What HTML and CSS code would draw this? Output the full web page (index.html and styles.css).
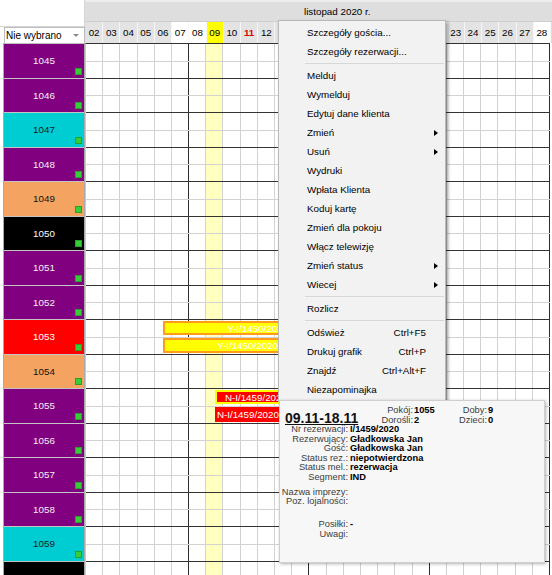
FILE: index.html
```html
<!DOCTYPE html>
<html lang="pl">
<head>
<meta charset="utf-8">
<title>Grafik rezerwacji</title>
<link rel="stylesheet" href="styles.css">
</head>
<body>
<div class="app">
  <div class="head">
    <div class="corner">
      <div class="corner-blank"></div>
      <div class="combo"><span>Nie wybrano</span><span class="combo-arrow"></span></div>
    </div>
    <div class="tl-head">
      <div class="month">listopad 2020 r.</div>
      <div class="days">
        <div class="day">02</div><div class="day">03</div><div class="day">04</div><div class="day">05</div><div class="day">06</div>
        <div class="day we">07</div><div class="day we">08</div><div class="day today">09</div><div class="day">10</div><div class="day hol">11</div>
        <div class="day">12</div><div class="day">13</div><div class="day we">14</div><div class="day we">15</div><div class="day">16</div>
        <div class="day">17</div><div class="day">18</div><div class="day">19</div><div class="day">20</div><div class="day we">21</div>
        <div class="day we">22</div><div class="day">23</div><div class="day">24</div><div class="day">25</div><div class="day">26</div>
        <div class="day">27</div><div class="day we">28</div>
      </div>
    </div>
  </div>

  <div class="body">
    <div class="rooms">
      <div class="room purple">1045<i class="flag"></i></div>
      <div class="room purple">1046<i class="flag"></i></div>
      <div class="room cyan">1047<i class="flag"></i></div>
      <div class="room purple">1048<i class="flag"></i></div>
      <div class="room sand">1049<i class="flag"></i></div>
      <div class="room black">1050<i class="flag"></i></div>
      <div class="room purple">1051<i class="flag"></i></div>
      <div class="room purple">1052<i class="flag"></i></div>
      <div class="room red">1053<i class="flag"></i></div>
      <div class="room sand">1054<i class="flag"></i></div>
      <div class="room purple">1055<i class="flag"></i></div>
      <div class="room purple">1056<i class="flag"></i></div>
      <div class="room purple">1057<i class="flag"></i></div>
      <div class="room purple">1058<i class="flag"></i></div>
      <div class="room cyan">1059<i class="flag"></i></div>
      <div class="room black">1060<i class="flag"></i></div>
    </div>

    <div class="grid">
      <div class="cols">
        <div class="col"></div><div class="col"></div><div class="col"></div><div class="col"></div><div class="col"></div>
        <div class="col wk"></div><div class="col"></div><div class="col today"></div><div class="col"></div><div class="col"></div>
        <div class="col"></div><div class="col"></div><div class="col wk"></div><div class="col"></div><div class="col"></div>
        <div class="col"></div><div class="col"></div><div class="col"></div><div class="col"></div><div class="col wk"></div>
        <div class="col"></div><div class="col"></div><div class="col"></div><div class="col"></div><div class="col"></div>
        <div class="col"></div><div class="col wk"></div>
      </div>
      <div class="rows">
        <div class="row"></div><div class="row"></div><div class="row"></div><div class="row"></div>
        <div class="row"></div><div class="row"></div><div class="row"></div><div class="row"></div>
        <div class="row"></div><div class="row"></div><div class="row"></div><div class="row"></div>
        <div class="row"></div><div class="row"></div><div class="row"></div><div class="row"></div>
      </div>
      <div class="bars">
        <div class="bar yellow b1">Y-I/1450/2020</div>
        <div class="bar yellow b2">Y-I/1450/2020</div>
        <div class="bar red sel b3">N-I/1459/2020</div>
        <div class="bar red b4">N-I/1459/2020</div>
      </div>
    </div>
  </div>

  <div class="menu">
    <div class="mi">Szczegóły gościa...</div>
    <div class="mi">Szczegóły rezerwacji...</div>
    <div class="sep"></div>
    <div class="mi">Melduj</div>
    <div class="mi">Wymelduj</div>
    <div class="mi">Edytuj dane klienta</div>
    <div class="mi">Zmień<span class="sub"></span></div>
    <div class="mi">Usuń<span class="sub"></span></div>
    <div class="mi">Wydruki</div>
    <div class="mi">Wpłata Klienta</div>
    <div class="mi">Koduj kartę</div>
    <div class="mi">Zmień dla pokoju</div>
    <div class="mi">Włącz telewizję</div>
    <div class="mi">Zmień status<span class="sub"></span></div>
    <div class="mi">Wiecej<span class="sub"></span></div>
    <div class="sep"></div>
    <div class="mi">Rozlicz</div>
    <div class="sep"></div>
    <div class="mi">Odśwież<span class="key">Ctrl+F5</span></div>
    <div class="mi">Drukuj grafik<span class="key">Ctrl+P</span></div>
    <div class="mi">Znajdź<span class="key">Ctrl+Alt+F</span></div>
    <div class="mi">Niezapominajka</div>
  </div>

  <div class="tip">
    <div class="tip-head">
      <div class="tip-date">09.11-18.11</div>
      <dl class="stat s1"><dt>Pokój:</dt><dd>1055</dd><dt>Dorośli:</dt><dd>2</dd></dl>
      <dl class="stat s2"><dt>Doby:</dt><dd>9</dd><dt>Dzieci:</dt><dd>0</dd></dl>
    </div>
    <dl class="tip-rows">
      <dt>Nr rezerwacji:</dt><dd>I/1459/2020</dd>
      <dt>Rezerwujący:</dt><dd>Gładkowska Jan</dd>
      <dt>Gość:</dt><dd>Gładkowska Jan</dd>
      <dt>Status rez.:</dt><dd>niepotwierdzona</dd>
      <dt>Status mel.:</dt><dd>rezerwacja</dd>
      <dt>Segment:</dt><dd>IND</dd>
    </dl>
    <dl class="tip-rows r2">
      <dt>Nazwa imprezy:</dt><dd></dd>
      <dt>Poz. lojalności:</dt><dd></dd>
    </dl>
    <dl class="tip-rows r3">
      <dt>Posiłki:</dt><dd>-</dd>
      <dt>Uwagi:</dt><dd></dd>
    </dl>
  </div>
</div>
</body>
</html>
```

FILE: styles.css
```css
* { box-sizing: border-box; }
html, body { margin: 0; padding: 0; }
body {
  width: 552px; height: 575px; overflow: hidden; background: #fff;
  font-family: "Liberation Sans", Arial, sans-serif; font-size: 9.6px; color: #000;
}
.app { position: relative; width: 552px; height: 575px; overflow: hidden; background: #fff; }

/* header */
.head { display: flex; height: 43px; }
.corner { width: 85px; flex: none; display: flex; flex-direction: column; }
.corner-blank { height: 27px; border-right: 1px solid #d6d6d6; border-bottom: 1px solid #d6d6d6; }
.combo {
  height: 16px; margin-left: 4px; border: 1px solid #bdbdbd; border-bottom: none;
  display: flex; align-items: center; justify-content: space-between;
  padding: 0 5px 0 1px; font-size: 10px; background: #fff;
}
.combo-arrow { width: 0; height: 0; border-left: 3px solid transparent; border-right: 3px solid transparent; border-top: 3px solid #8c8c8c; }
.tl-head { flex: 1; background: #dedede; display: flex; flex-direction: column; }
.month { height: 22px; border-top: 2px solid #ededed; border-bottom: 1px solid #cfcfcf; padding: 4px 0 0 219px; line-height: 12px; font-size: 9.8px; }
.days { display: grid; grid-template-columns: repeat(27, 1fr); width: 465px; height: 21px; margin-left: 1px; }
.day { background: #e3e3e3; border-right: 1px solid #f6f6f6; text-align: center; line-height: 21px; font-size: 9.8px; }
.day.we { background: #fff; }
.day.today { background: #ffff00; }
.day.hol { color: #e00000; font-weight: bold; }

/* body */
.body { display: flex; height: 532px; }
.rooms { flex: none; width: 82px; margin-left: 3px; border-left: 1px solid #aaaaaa; border-right: 1px solid #aaaaaa; border-top: 1px solid #bdbdbd; }
.room {
  position: relative; height: 34.5px; border-bottom: 1px solid #c4c4c4;
  display: flex; align-items: center; justify-content: center; font-size: 9.8px;
}
.room.purple { background: #800080; color: #f2f2f2; }
.room.cyan { background: #00cdd2; color: #1a1a1a; }
.room.sand { background: #f4a460; color: #111; }
.room.black { background: #000; color: #fff; }
.room.red { background: #ff0000; color: #fff; }
.flag { position: absolute; right: 2px; bottom: 3px; width: 7px; height: 7px; background: #38cc38; box-shadow: inset 0 0 0 1px #23a523; }

.grid { flex: none; width: 465px; display: grid; border-top: 1px solid #333; border-left: 1px solid #c8c8c8; align-self: flex-start; }
.grid > * { grid-area: 1 / 1; }
.cols { display: grid; grid-template-columns: repeat(27, 1fr); }
.col { border-right: 1px solid #d2d2d2; }
.col.wk { border-right-color: #2e2e2e; }
.col.today { background: #ffffc0; }
.rows { display: grid; grid-template-rows: repeat(16, 34.5px); }
.row { border-bottom: 1px solid #333; }
.row::before { content: ""; display: block; height: 50%; border-bottom: 1px solid #d2d2d2; }
.bars { display: grid; grid-template-columns: repeat(54, 1fr); grid-template-rows: repeat(32, 17.25px); }
.bar {
  margin: 1px 0 2px; overflow: hidden; white-space: nowrap; color: #fff;
  font-size: 9.8px; display: flex; align-items: center;
}
.bar.yellow { background: #ffff00; border: 2px solid #ff9a1a; }
.bar.red { background: #ff0000; border: 1px solid #ff0000; }
.bar.red.sel { border: 2px solid #ffff00; }
.b1 { grid-column: 10 / 33; grid-row: 17; padding-left: 62px; }
.b2 { grid-column: 10 / 31; grid-row: 18; padding-left: 52px; }
.b3 { grid-column: 16 / 34; grid-row: 21; padding-left: 8px; }
.b4 { grid-column: 16 / 25; grid-row: 22; padding-left: 1px; }

/* context menu */
.menu {
  position: absolute; left: 278px; top: 20px; width: 168px; z-index: 2;
  background: #f2f2f2; border: 1px solid #b9b9b9; padding: 2px 0;
  box-shadow: 2px 2px 3px rgba(0, 0, 0, .4); font-size: 9.8px;
}
.mi { height: 19px; display: flex; align-items: center; justify-content: space-between; padding: 0 19px 0 28px; }
.sep { height: 1px; background: #d7d7d7; margin: 2px 1px 2px 26px; }
.sub { width: 0; height: 0; margin-right: -12px; border-left: 4px solid #000; border-top: 3.5px solid transparent; border-bottom: 3.5px solid transparent; }

/* tooltip */
.tip {
  position: absolute; left: 279px; top: 400px; width: 266px; height: 163px; z-index: 3;
  background: #f7f7f7; border: 1px solid #cfcfcf; box-shadow: 1px 1px 3px rgba(0, 0, 0, .3);
  padding: 5px 0 0 0; font-size: 9.3px; line-height: 9.5px; color: #3c3c3c;
}
.tip dl { margin: 0; }
.tip dd { margin: 0; font-weight: bold; color: #000; }
.tip-head { display: flex; align-items: flex-start; }
.tip-date { flex: none; width: 72px; margin: 5px 0 0 5px; font-size: 14px; line-height: 14px; font-weight: bold; color: #111; text-decoration: underline; white-space: nowrap; }
.stat { display: grid; grid-template-columns: 56px auto; column-gap: 1px; }
.stat dt { text-align: right; }
.s1 { width: 74px; }
.tip-rows { display: grid; grid-template-columns: 68px auto; column-gap: 2px; margin-top: 2.5px; }
.tip-rows dt { text-align: right; }
.tip-rows.r2 { margin-top: 5.5px; }
.tip-rows.r3 { margin-top: 13.5px; }
```
